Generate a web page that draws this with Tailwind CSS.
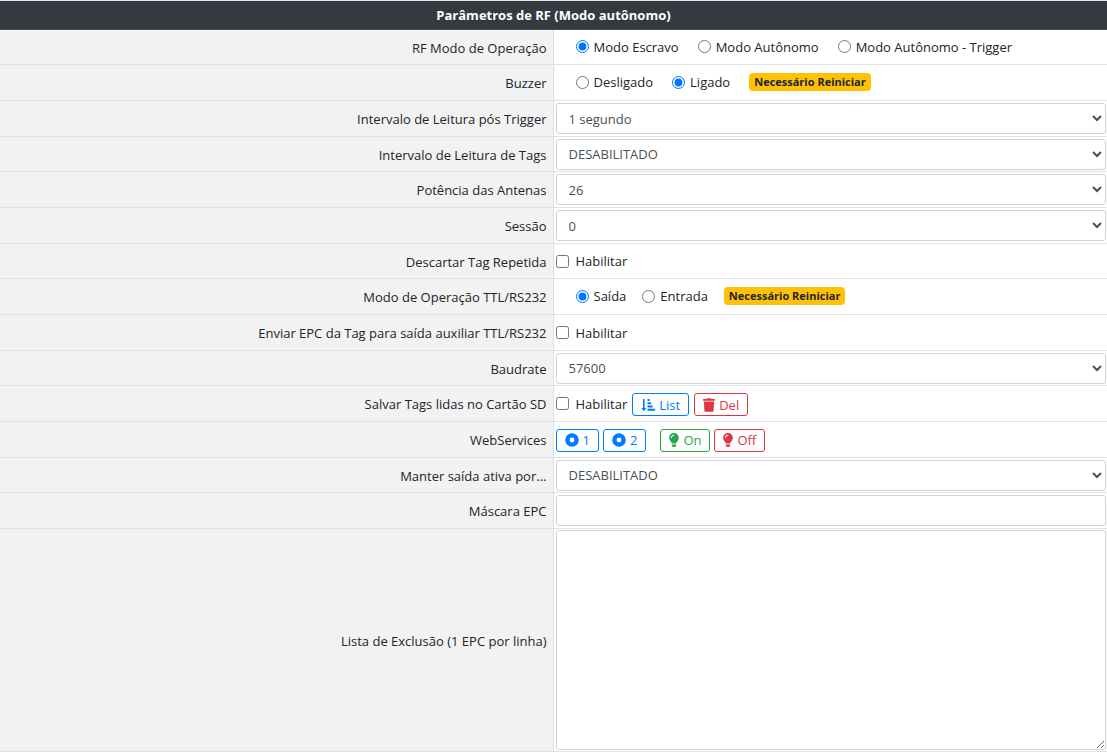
<!DOCTYPE html>
<html lang="pt-BR">
<head>
<meta charset="utf-8">
<meta name="viewport" content="width=device-width, initial-scale=1">
<title>Parâmetros de RF</title>
<script src="https://cdn.jsdelivr.net/npm/@tailwindcss/browser@4"></script>
</head>
<body class="bg-white font-['Segoe_UI','Open_Sans','Noto_Sans',sans-serif] text-[13px] leading-5 text-[#212529]">
<form>
<table class="w-full table-fixed border-separate border-spacing-0 [&_tbody_th]:border-r [&_tbody_th]:border-b [&_tbody_th]:border-[#dee2e6] [&_tbody_th]:bg-[#f2f2f2] [&_tbody_th]:pt-px [&_tbody_th]:pr-1.5 [&_tbody_th]:text-right [&_tbody_th]:font-normal [&_td]:border-b [&_td]:border-[#dee2e6] [&_td]:pl-0.5 [&_td]:pr-px [&_td]:align-middle">
  <thead>
    <tr class="h-[30px]"><th colspan="2" class="border-t border-b border-t-[#dee2e6] border-b-[#454d55] bg-[#343a40] text-center font-bold text-white">Parâmetros de RF (Modo autônomo)</th></tr>
  </thead>
  <tbody>
    <tr class="h-[35px]">
      <th scope="row">RF Modo de Operação</th>
      <td><div class="flex items-center gap-[19px] pb-px pl-5">
        <label class="flex items-center gap-[5px]"><input type="radio" name="modo" checked class="size-[13px] accent-[#0075ff]">Modo Escravo</label>
        <label class="flex items-center gap-[5px]"><input type="radio" name="modo" class="size-[13px] accent-[#0075ff]">Modo Autônomo</label>
        <label class="flex items-center gap-[5px]"><input type="radio" name="modo" class="size-[13px] accent-[#0075ff]">Modo Autônomo - Trigger</label>
      </div></td>
    </tr>
    <tr class="h-[36px]">
      <th scope="row">Buzzer</th>
      <td><div class="flex items-center gap-[19px] pb-px pl-5">
        <label class="flex items-center gap-[5px]"><input type="radio" name="buzzer" class="size-[13px] accent-[#0075ff]">Desligado</label>
        <label class="flex items-center gap-[5px]"><input type="radio" name="buzzer" checked class="size-[13px] accent-[#0075ff]">Ligado</label>
        <span class="rounded bg-[#ffc107] px-[5px] text-[11px] leading-[18px] font-bold">Necessário Reiniciar</span>
      </div></td>
    </tr>
    <tr class="h-[36px]">
      <th scope="row"><label for="trigger">Intervalo de Leitura pós Trigger</label></th>
      <td><select id="trigger" class="block h-[31px] w-full rounded-[3px] border border-[#ced4da] bg-white pl-2 text-[#495057]"><option>1 segundo</option></select></td>
    </tr>
    <tr class="h-[35px]">
      <th scope="row"><label for="tags">Intervalo de Leitura de Tags</label></th>
      <td><select id="tags" class="block h-[31px] w-full rounded-[3px] border border-[#ced4da] bg-white pl-2 text-[#495057]"><option>DESABILITADO</option></select></td>
    </tr>
    <tr class="h-[36px]">
      <th scope="row"><label for="potencia">Potência das Antenas</label></th>
      <td><select id="potencia" class="block h-[31px] w-full rounded-[3px] border border-[#ced4da] bg-white pl-2 text-[#495057]"><option>26</option></select></td>
    </tr>
    <tr class="h-[36px]">
      <th scope="row"><label for="sessao">Sessão</label></th>
      <td><select id="sessao" class="block h-[31px] w-full rounded-[3px] border border-[#ced4da] bg-white pl-2 text-[#495057]"><option>0</option></select></td>
    </tr>
    <tr class="h-[35px]">
      <th scope="row">Descartar Tag Repetida</th>
      <td><label class="flex items-center gap-[7px]"><input type="checkbox" class="size-[13px]">Habilitar</label></td>
    </tr>
    <tr class="h-[36px]">
      <th scope="row">Modo de Operação TTL/RS232</th>
      <td><div class="flex items-center gap-4 pb-px pl-5">
        <label class="flex items-center gap-[5px]"><input type="radio" name="ttl" checked class="size-[13px] accent-[#0075ff]">Saída</label>
        <label class="flex items-center gap-[5px]"><input type="radio" name="ttl" class="size-[13px] accent-[#0075ff]">Entrada</label>
        <span class="rounded bg-[#ffc107] px-[5px] text-[11px] leading-[18px] font-bold">Necessário Reiniciar</span>
      </div></td>
    </tr>
    <tr class="h-[36px]">
      <th scope="row">Enviar EPC da Tag para saída auxiliar TTL/RS232</th>
      <td><label class="flex items-center gap-[7px]"><input type="checkbox" class="size-[13px]">Habilitar</label></td>
    </tr>
    <tr class="h-[35px]">
      <th scope="row"><label for="baud">Baudrate</label></th>
      <td><select id="baud" class="block h-[31px] w-full rounded-[3px] border border-[#ced4da] bg-white pl-2 text-[#495057]"><option>57600</option></select></td>
    </tr>
    <tr class="h-[36px]">
      <th scope="row">Salvar Tags lidas no Cartão SD</th>
      <td><div class="flex items-center gap-[5px]">
        <label class="flex items-center gap-[7px]"><input type="checkbox" class="size-[13px]">Habilitar</label>
        <button type="button" class="mt-0.5 flex h-[23px] items-center gap-1 rounded-[3px] border border-[#007bff] px-2 text-[#007bff]">
          <svg class="h-[14px] w-[14px]" viewBox="0 0 14 14" fill="currentColor" aria-hidden="true"><path d="M2 1h1.600v9H5.300L2.800 13.200.3 10H2zM6.500 1h2.200v2H6.500zM6.500 4.200h3.600v2H6.500zM6.500 7.500h5.200v2H6.500zM6.500 10.800H14v2H6.500z"/></svg>List</button>
        <button type="button" class="mt-0.5 flex h-[23px] items-center gap-1 rounded-[3px] border border-[#dc3545] px-2 text-[#dc3545]">
          <svg class="h-[14px] w-[12px]" viewBox="0 0 448 512" fill="currentColor" aria-hidden="true"><path d="M432 32H312l-9.400-18.700A24 24 0 0 0 281.100 0H166.800a23.700 23.700 0 0 0-21.400 13.300L136 32H16A16 16 0 0 0 0 48v32a16 16 0 0 0 16 16h416a16 16 0 0 0 16-16V48a16 16 0 0 0-16-16zM53.200 467a48 48 0 0 0 47.900 45h245.800a48 48 0 0 0 47.900-45L416 128H32z"/></svg>Del</button>
      </div></td>
    </tr>
    <tr class="h-[36px]">
      <th scope="row">WebServices</th>
      <td><div class="flex items-center gap-1 pt-px">
        <button type="button" class="flex h-[23px] items-center gap-1 rounded-[3px] border border-[#007bff] px-2 text-[#007bff]">
          <svg class="size-[14px]" viewBox="0 0 14 14" aria-hidden="true"><circle cx="7" cy="7" r="4.600" fill="none" stroke="currentColor" stroke-width="4.400"/></svg>1</button>
        <button type="button" class="flex h-[23px] items-center gap-1 rounded-[3px] border border-[#007bff] px-2 text-[#007bff]">
          <svg class="size-[14px]" viewBox="0 0 14 14" aria-hidden="true"><circle cx="7" cy="7" r="4.600" fill="none" stroke="currentColor" stroke-width="4.400"/></svg>2</button>
        <button type="button" class="ml-2.5 flex h-[23px] items-center gap-1 rounded-[3px] border border-[#28a745] px-2 text-[#28a745]">
          <svg class="h-[14px] w-[10px]" viewBox="0 0 352 512" aria-hidden="true"><path fill="currentColor" d="M96.100 454.400c0 6.300 1.900 12.500 5.400 17.700l17.100 25.700a32 32 0 0 0 26.600 14.300h61.700a32 32 0 0 0 26.600-14.300l17.100-25.700a32 32 0 0 0 5.400-17.700l0-38.400H96zM0 176c0 44.400 16.500 84.900 43.600 115.800 16.500 18.900 42.400 58.200 52.200 91.500v.7h160.200v-.7c9.800-33.300 35.700-72.600 52.200-91.500C335.600 260.900 352 220.400 352 176 352 78.600 272.900-.3 175.500 0 73.400.3 0 83 0 176zm176-80c-44.100 0-80 35.900-80 80 0 8.800-7.200 16-16 16s-16-7.200-16-16c0-61.800 50.200-112 112-112 8.800 0 16 7.200 16 16s-7.200 16-16 16z"/></svg>On</button>
        <button type="button" class="flex h-[23px] items-center gap-1 rounded-[3px] border border-[#dc3545] px-2 text-[#dc3545]">
          <svg class="h-[14px] w-[10px]" viewBox="0 0 352 512" aria-hidden="true"><path fill="currentColor" d="M96.100 454.400c0 6.300 1.900 12.500 5.400 17.700l17.100 25.700a32 32 0 0 0 26.600 14.300h61.700a32 32 0 0 0 26.600-14.300l17.100-25.700a32 32 0 0 0 5.400-17.700l0-38.400H96zM0 176c0 44.400 16.500 84.900 43.600 115.800 16.500 18.900 42.400 58.200 52.200 91.500v.7h160.200v-.7c9.800-33.300 35.700-72.600 52.200-91.500C335.600 260.900 352 220.400 352 176 352 78.600 272.900-.3 175.500 0 73.400.3 0 83 0 176zm176-80c-44.100 0-80 35.900-80 80 0 8.800-7.200 16-16 16s-16-7.200-16-16c0-61.800 50.200-112 112-112 8.800 0 16 7.200 16 16s-7.200 16-16 16z"/></svg>Off</button>
      </div></td>
    </tr>
    <tr class="h-[35px]">
      <th scope="row"><label for="saida">Manter saída ativa por...</label></th>
      <td><select id="saida" class="block h-[31px] w-full rounded-[3px] border border-[#ced4da] bg-white pl-2 text-[#495057]"><option>DESABILITADO</option></select></td>
    </tr>
    <tr class="h-[36px]">
      <th scope="row"><label for="mascara">Máscara EPC</label></th>
      <td><input id="mascara" type="text" class="block h-[31px] w-full rounded-[3px] border border-[#ced4da] bg-white px-2 text-[#495057]"></td>
    </tr>
    <tr>
      <th scope="row"><label for="lista">Lista de Exclusão (1 EPC por linha)</label></th>
      <td class="py-px"><textarea id="lista" class="block h-[220px] w-full rounded-[3px] border border-[#ced4da] bg-white px-2 text-[#495057]"></textarea></td>
    </tr>
  </tbody>
</table>
</form>
</body>
</html>
